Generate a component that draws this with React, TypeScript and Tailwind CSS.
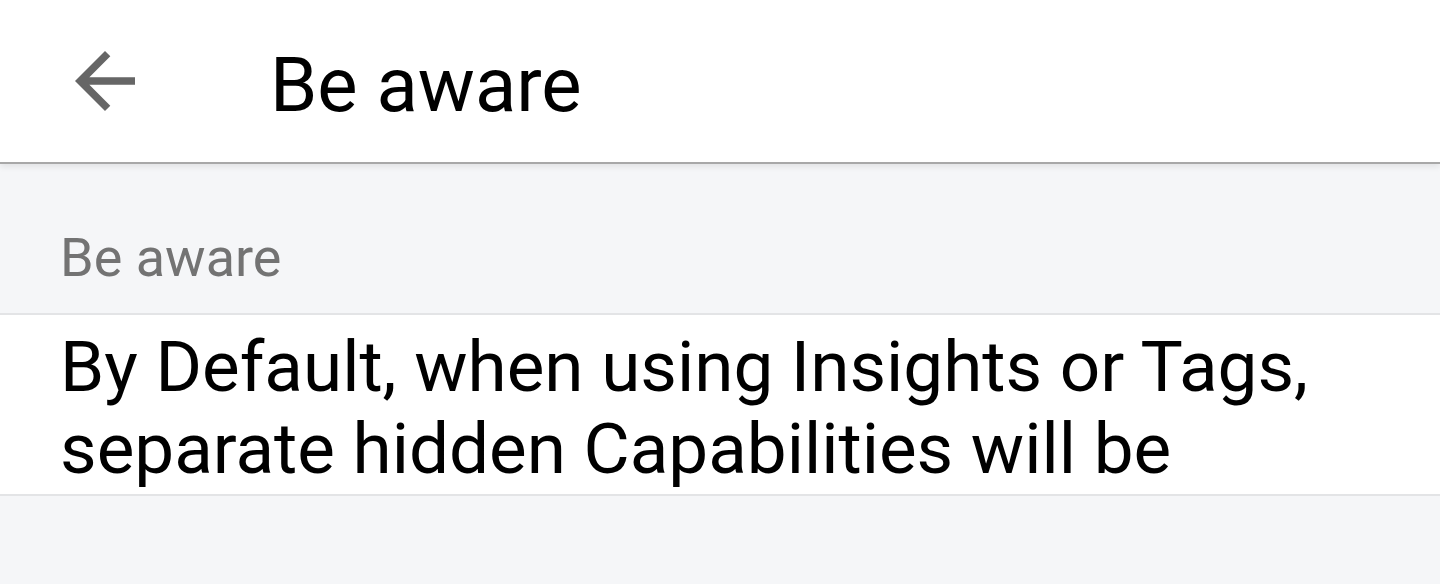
export default function App() {
  return (
    <div className="w-[1440px] h-[584px] bg-[#f5f6f8] overflow-hidden" style={{ fontFamily: "Roboto, sans-serif" }}>
      <div className="h-[164px] bg-white border-b-2 border-[#a8a8a8] flex items-start shadow-[0_3px_6px_rgba(0,0,0,0.08)] relative z-10">
        <svg className="ml-[60px] mt-[36px] w-[90px] h-[90px]" viewBox="0 0 24 24" fill="#666666">
          <path d="M20 11H7.83l5.59-5.59L12 4l-8 8 8 8 1.41-1.41L7.83 13H20v-2z" />
        </svg>
        <div className="ml-[120px] mt-[47px] text-[76px] leading-none text-black">Be aware</div>
      </div>
      <div className="h-[149px] flex items-end pb-[28px] pl-[60px]">
        <div className="text-[54px] leading-none text-[#737373]">Be aware</div>
      </div>
      <div className="bg-white border-y-2 border-[#e3e4e6] h-[183px] pl-[60px] pr-[40px] pt-[11px] overflow-hidden">
        <div className="text-[71px] leading-[81.5px] text-black">
          <div>By Default, when using Insights or Tags,</div>
          <div>separate hidden Capabilities will be</div>
        </div>
      </div>
    </div>
  );
}
